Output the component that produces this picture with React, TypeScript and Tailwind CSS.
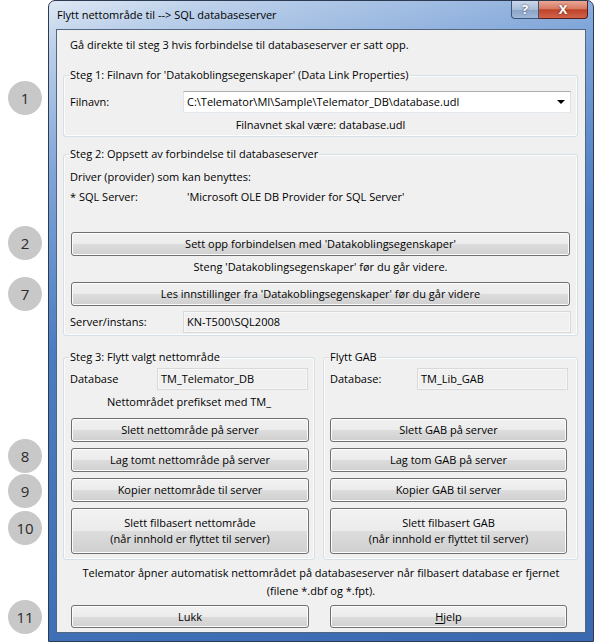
import React from "react";

const Btn = ({ children, className = "" }: { children: React.ReactNode; className?: string }) => (
  <button
    type="button"
    className={`flex flex-col items-center justify-center rounded-[3px] border border-[#707070] bg-[linear-gradient(#f2f2f2,#ebebeb_50%,#dddddd_50%,#cfcfcf)] text-center leading-[16px] text-black shadow-[inset_0_0_0_1px_#fcfcfc] ${className}`}
  >
    {children}
  </button>
);

const Field = ({ children, className = "" }: { children?: React.ReactNode; className?: string }) => (
  <div className={`flex h-[22px] items-center border border-[#d9d9d9] bg-[#f0f0f0] pl-[3px] shadow-[inset_0_0_0_1px_#f7f7f7] ${className}`}>
    {children}
  </div>
);

const Group = ({ title, className = "", children }: { title: string; className?: string; children: React.ReactNode }) => (
  <fieldset className={`rounded-[3px] border border-[#d5dfe5] shadow-[inset_0_0_0_1px_#fbfcfc] ${className}`}>
    <legend className="ml-[5px] px-[1px] leading-[16px]">{title}</legend>
    {children}
  </fieldset>
);

const Pin = ({ n, top }: { n: string; top: string }) => (
  <div
    className={`absolute left-[8px] ${top} flex h-[34px] w-[34px] items-center justify-center rounded-full bg-[#c8c8c8] text-[15px] text-[#2b2b2b]`}
  >
    {n}
  </div>
);

export default function App() {
  return (
    <div className="flex h-[642px] w-[594px] bg-white font-['Open_Sans',sans-serif] text-[11px] text-black">
      {/* numbered markers */}
      <div className="relative w-[48px] shrink-0">
        <Pin n="1" top="top-[81px]" />
        <Pin n="2" top="top-[226px]" />
        <Pin n="7" top="top-[277px]" />
        <Pin n="8" top="top-[439px]" />
        <Pin n="9" top="top-[474px]" />
        <Pin n="10" top="top-[511px]" />
        <Pin n="11" top="top-[600px]" />
      </div>

      {/* dialog window */}
      <div className="flex h-[642px] w-[546px] flex-col rounded-t-[7px] border border-[#2c3b52] bg-[linear-gradient(165deg,#dfe8f4_0%,#bcd0ea_6%,#7fa5d9_22%,#4a7cc2_45%,#3a69b0_100%)]">
        <div className="flex h-[28px] items-start">
          <span className="pl-[8px] pt-[6px] leading-[16px] text-black">Flytt nettområde til --&gt; SQL databaseserver</span>
          <div className="ml-auto mr-[5px] flex h-[18px]">
            <div className="flex w-[28px] items-center justify-center rounded-bl-[4px] border border-t-0 border-[#3b5577] bg-[linear-gradient(#c9d7ea,#a9bcd6_50%,#8aa3c6_51%,#9fb7d8)] text-[13px] font-bold text-white [text-shadow:0_0_2px_#27384f]">
              ?
            </div>
            <div className="flex w-[49px] items-center justify-center rounded-br-[4px] border border-l-0 border-t-0 border-[#5a1f15] bg-[linear-gradient(#e9a897,#d77a64_45%,#c0432a_52%,#d0644a)] text-[13px] font-bold text-white [text-shadow:0_0_2px_#5a1a10]">
              X
            </div>
          </div>
        </div>

        <div className="mx-[7px] flex h-[604px] flex-col border border-[#52667f] bg-[#f0f0f0] pt-[7px]">
          <p className="pl-[13px] leading-[16px]">Gå direkte til steg 3 hvis forbindelse til databaseserver er satt opp.</p>

          <Group title="Steg 1: Filnavn for 'Datakoblingsegenskaper' (Data Link Properties)" className="ml-[6px] mr-[7px] mt-[14px] pb-[3px]">
            <div className="mt-[8px] flex items-center pl-[6px] pr-[6px]">
              <span className="w-[113px] shrink-0">Filnavn:</span>
              <div className="flex h-[22px] flex-1 items-center border border-[#abadb3] border-b-[#e3e9ef] border-l-[#e2e3ea] border-r-[#dbdfe6] bg-white pl-[3px] pr-[5px]">
                <span className="flex-1">C:\Telemator\MI\Sample\Telemator_DB\database.udl</span>
                <span className="h-0 w-0 border-x-[4px] border-t-[4px] border-x-transparent border-t-black" />
              </div>
            </div>
            <p className="mt-[4px] text-center leading-[16px]">Filnavnet skal være: database.udl</p>
          </Group>

          <Group title="Steg 2: Oppsett av forbindelse til databaseserver" className="ml-[6px] mr-[7px] mt-[9px] pb-[2px]">
            <p className="mt-[7px] pl-[6px] leading-[16px]">Driver (provider) som kan benyttes:</p>
            <div className="mt-[4px] flex pl-[6px] leading-[16px]">
              <span className="w-[117px] shrink-0">* SQL Server:</span>
              <span>'Microsoft OLE DB Provider for SQL Server'</span>
            </div>
            <Btn className="ml-[7px] mr-[6px] mt-[27px] h-[24px] w-[499px]">Sett opp forbindelsen med 'Datakoblingsegenskaper'</Btn>
            <p className="mt-[3px] text-center leading-[16px]">Steng 'Datakoblingsegenskaper' før du går videre.</p>
            <Btn className="ml-[7px] mr-[6px] mt-[7px] h-[24px] w-[499px]">Les innstillinger fra 'Datakoblingsegenskaper' før du går videre</Btn>
            <div className="mt-[5px] flex items-center pl-[6px] pr-[6px]">
              <span className="w-[113px] shrink-0">Server/instans:</span>
              <Field className="flex-1">KN-T500\SQL2008</Field>
            </div>
          </Group>

          <div className="ml-[6px] mt-[13px] flex gap-[8px]">
            <Group title="Steg 3: Flytt valgt nettområde" className="w-[252px] pb-[5px]">
              <div className="mt-[3px] flex items-center pl-[6px]">
                <span className="w-[87px] shrink-0">Database</span>
                <Field className="w-[151px]">TM_Telemator_DB</Field>
              </div>
              <p className="mt-[4px] text-center leading-[16px]">Nettområdet prefikset med TM_</p>
              <div className="ml-[7px] flex w-[238px] flex-col gap-[6px] pt-[8px]">
                <Btn className="h-[24px]">Slett nettområde på server</Btn>
                <Btn className="h-[24px]">Lag tomt nettområde på server</Btn>
                <Btn className="h-[24px]">Kopier nettområde til server</Btn>
                <Btn className="h-[46px]">
                  <span>Slett filbasert nettområde</span>
                  <span>(når innhold er flyttet til server)</span>
                </Btn>
              </div>
            </Group>

            <Group title="Flytt GAB" className="w-[255px] pb-[5px]">
              <div className="mt-[3px] flex items-center pl-[6px]">
                <span className="w-[87px] shrink-0">Database:</span>
                <Field className="w-[151px]">TM_Lib_GAB</Field>
              </div>
              <p className="mt-[4px] h-[16px]" />
              <div className="ml-[6px] flex w-[237px] flex-col gap-[6px] pt-[8px]">
                <Btn className="h-[24px]">Slett GAB på server</Btn>
                <Btn className="h-[24px]">Lag tom GAB på server</Btn>
                <Btn className="h-[24px]">Kopier GAB til server</Btn>
                <Btn className="h-[46px]">
                  <span>Slett filbasert GAB</span>
                  <span>(når innhold er flyttet til server)</span>
                </Btn>
              </div>
            </Group>
          </div>

          <div className="mt-[4px] text-center leading-[18px]">
            <p>Telemator åpner automatisk nettområdet på databaseserver når filbasert database er fjernet</p>
            <p>(filene *.dbf og *.fpt).</p>
          </div>

          <div className="ml-[14px] mt-[5px] flex gap-[21px]">
            <Btn className="h-[23px] w-[238px]">Lukk</Btn>
            <Btn className="h-[23px] w-[237px]">
              <span>
                <span className="underline underline-offset-2">H</span>jelp
              </span>
            </Btn>
          </div>
        </div>
      </div>
    </div>
  );
}
